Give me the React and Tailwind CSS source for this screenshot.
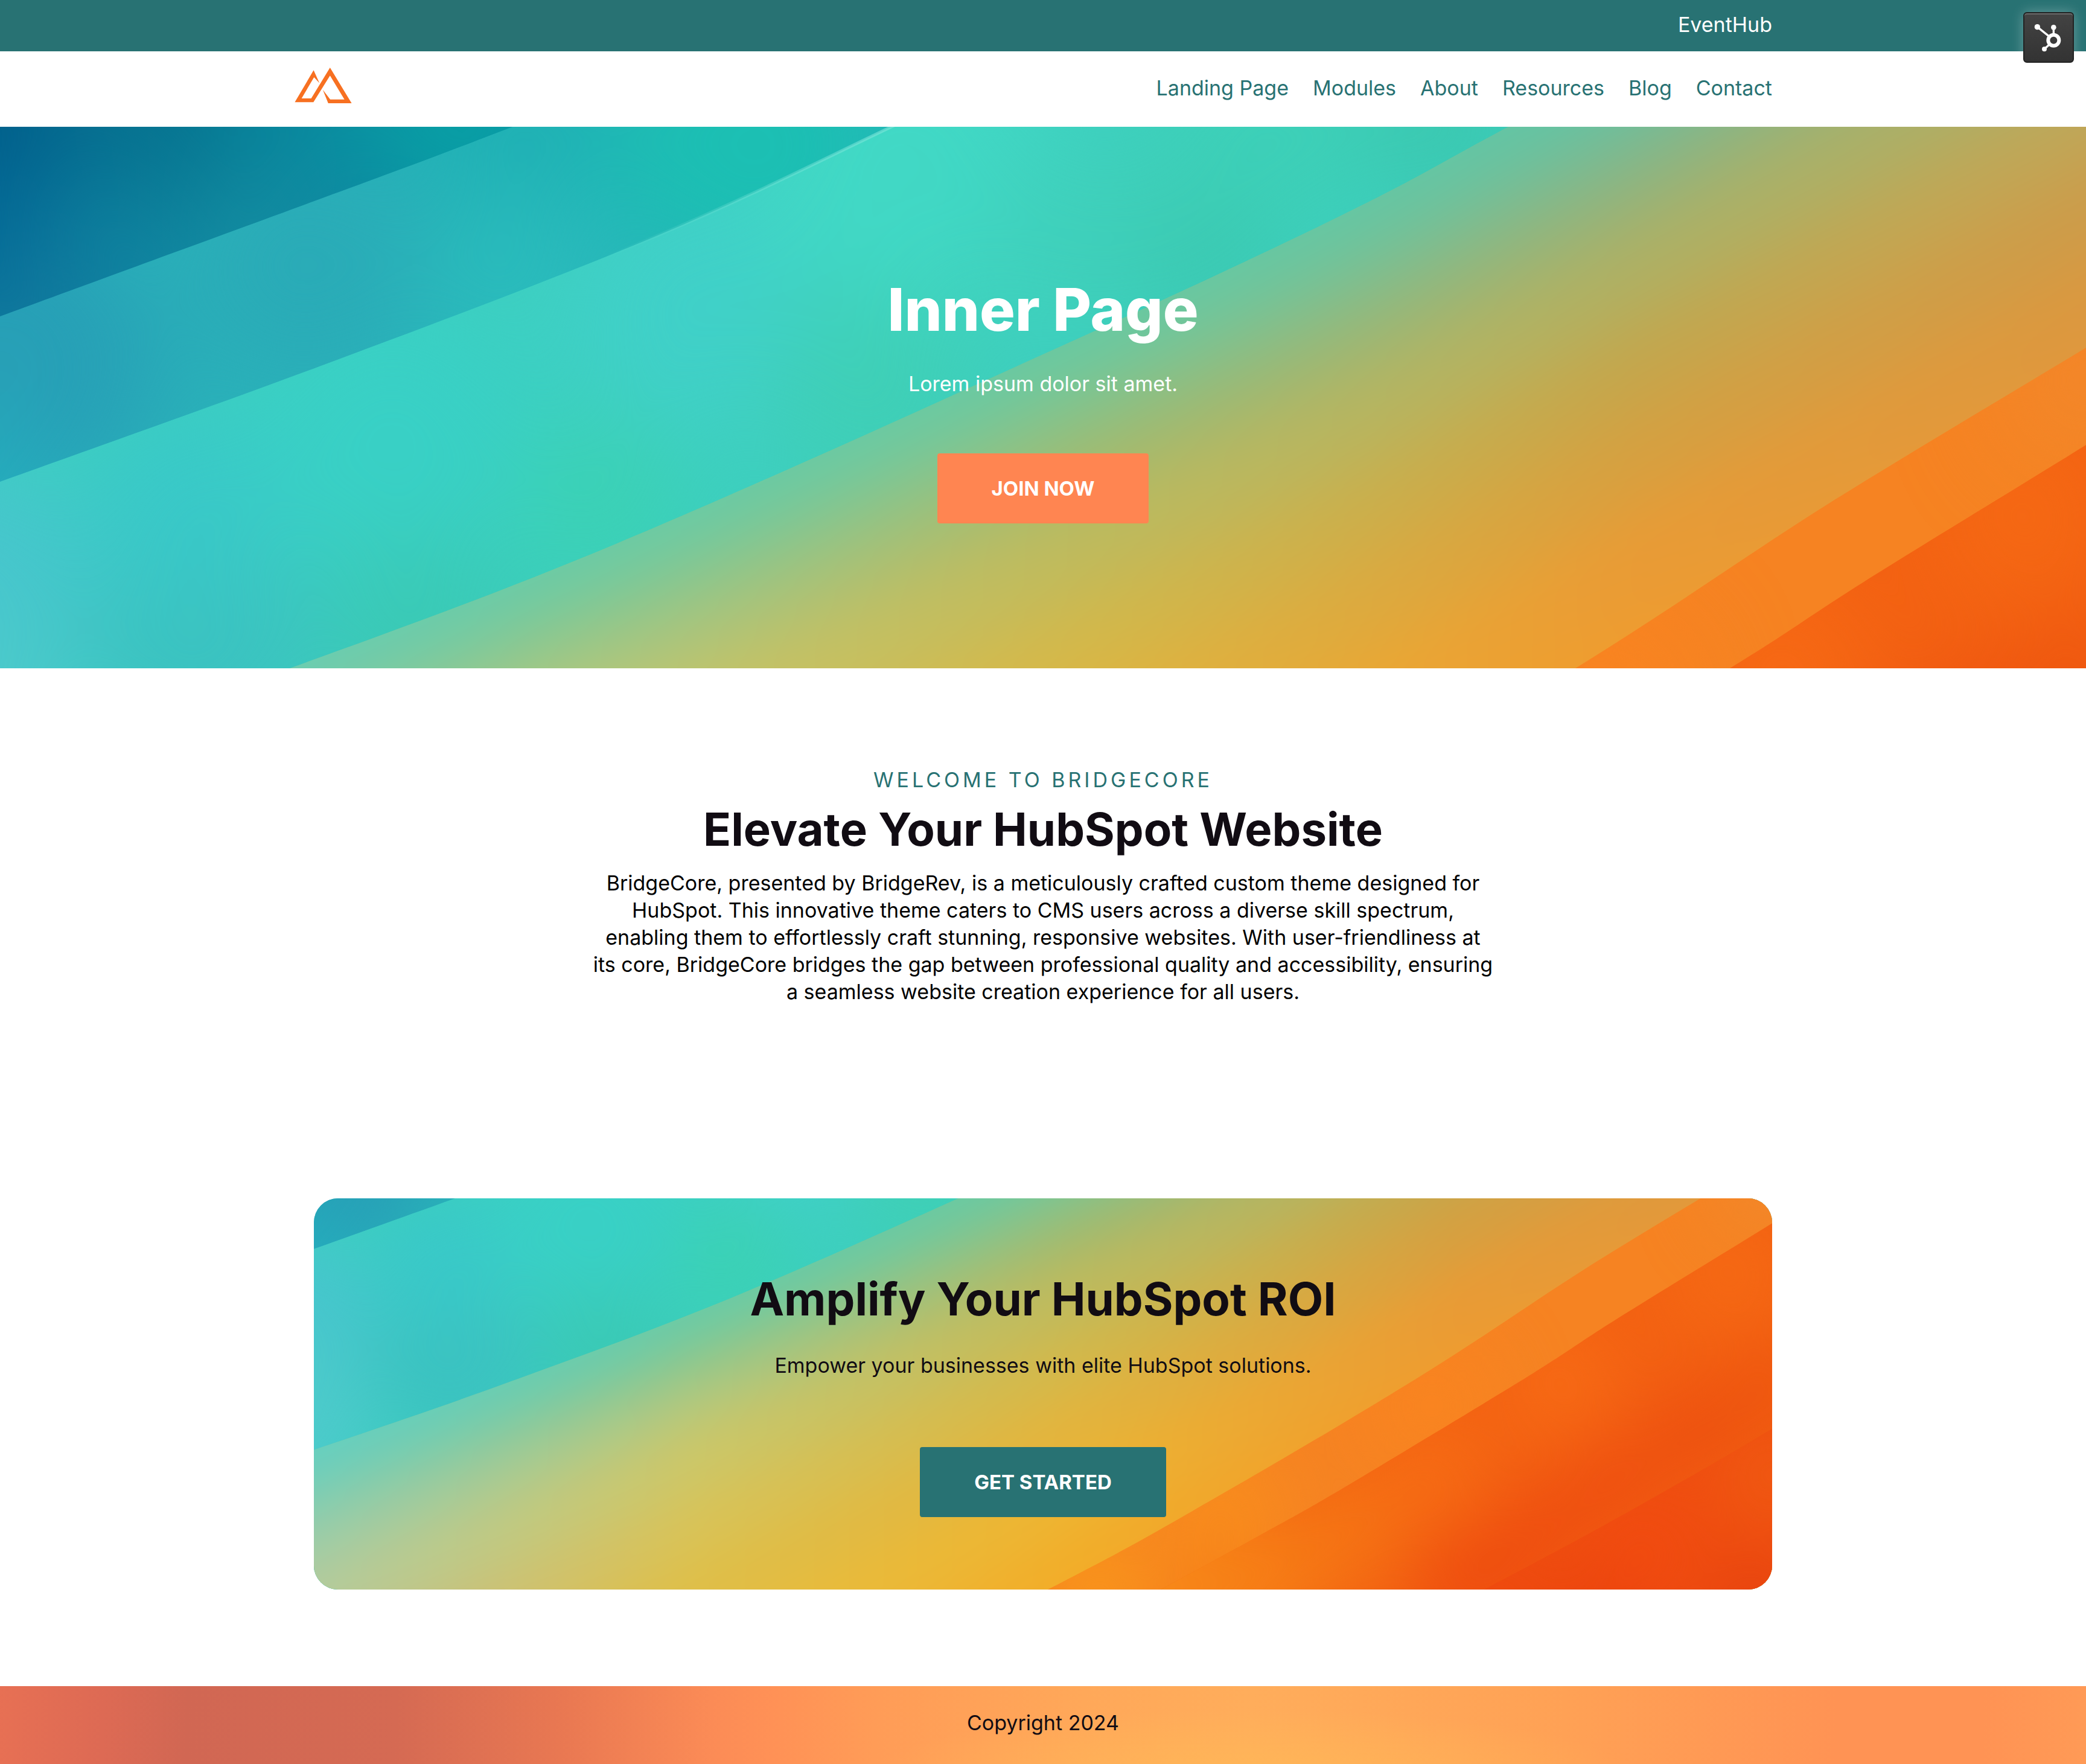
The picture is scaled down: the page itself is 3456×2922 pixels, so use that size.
import { useId } from "react";

function curve(points) {
  const at = (i) => points[Math.max(0, Math.min(points.length - 1, i))];
  let d = "";
  for (let i = 0; i < points.length - 1; i++) {
    const [p0, p1, p2, p3] = [at(i - 1), at(i), at(i + 1), at(i + 2)];
    const a = [Math.round(p1[0] + (p2[0] - p0[0]) / 6), Math.round(p1[1] + (p2[1] - p0[1]) / 6)];
    const b = [Math.round(p2[0] - (p3[0] - p1[0]) / 6), Math.round(p2[1] - (p3[1] - p1[1]) / 6)];
    d += ` C${a} ${b} ${p2}`;
  }
  return `M${points[0]}${d}`;
}

const EDGE_A = curve([[-300, 425], [0, 314], [518, 124], [849, 0], [1200, -140]]);
const EDGE_B = curve([[-300, 696], [0, 588], [529, 397], [1080, 184], [1477, 0], [1800, -160]]);
const EDGE_C = curve([[-300, 1160], [0, 1064], [480, 897], [1025, 689], [1728, 377], [2224, 146], [2499, 0], [2900, -215], [3456, -520], [3900, -770]]);
const EDGE_D = curve([[1350, 1590], [1739, 1395], [2056, 1224], [2610, 897], [3028, 625], [3456, 366], [3800, 160]]);
const EDGE_E = curve([[1850, 1480], [2226, 1275], [2452, 1147], [2874, 892], [3086, 755], [3456, 527], [3800, 310]]);
const EDGE_G = curve([[2500, 1540], [2849, 1355], [3131, 1202], [3457, 1013], [3800, 800]]);

const FRAME = "M-300 -300H4000V1700H-300Z";

const BANDS = [
  {
    id: "teal",
    path: FRAME,
    base: "#2ab3ba",
    blobs: [
      [0, 400, 260, "#279fb6"],
      [-50, 640, 160, "#25adbd"],
      [500, 230, 200, "#2aabb7"],
      [850, 0, 180, "#1fb0b4"],
      [850, 260, 160, "#2abcbc"],
      [1250, 30, 240, "#1cbfb3"],
    ],
  },
  {
    id: "deep",
    path: `${EDGE_A}V-400H-300Z`,
    base: "#0f84a0",
    blobs: [
      [-60, 0, 190, "#005c88"],
      [-60, 180, 150, "#046996"],
      [60, 330, 110, "#12799e"],
      [300, -40, 170, "#06728f"],
      [500, -20, 130, "#09899e"],
      [420, 200, 120, "#158fa2"],
      [780, 0, 180, "#099fa5"],
    ],
  },
  {
    id: "mint",
    path: `${EDGE_B}H4000V1700H-300Z`,
    base: "#3dcfc0",
    blobs: [
      [-80, 760, 220, "#47c5cd"],
      [-60, 1000, 200, "#4dcacb"],
      [330, 860, 200, "#3bc2c0"],
      [300, 620, 160, "#39c8c8"],
      [650, 520, 240, "#39d0c5"],
      [1000, 620, 150, "#3bd1b4"],
      [700, 840, 160, "#3ac9b4"],
      [1150, 300, 220, "#40d0c8"],
      [1500, 60, 260, "#41d8c5"],
      [1450, 450, 180, "#3fcfb6"],
      [1800, 200, 180, "#3fd0bb"],
      [2100, 20, 200, "#3dd0b8"],
      [2400, 0, 150, "#3bc8b0"],
      [2000, 230, 120, "#3bc8b0"],
    ],
  },
  { id: "olive", path: `${EDGE_C}V1700H-300Z`, base: "#80c594", layered: true, blobs: [] },
  {
    id: "orange",
    path: `${EDGE_D}V1700H1350Z`,
    base: "#f68322",
    blobs: [
      [3456, 420, 140, "#f2872a"],
      [2650, 960, 150, "#f98420"],
      [2150, 1220, 150, "#f88d1d"],
      [1850, 1400, 130, "#f9971a"],
      [2150, 1430, 130, "#f67f16"],
    ],
  },
  {
    id: "red",
    path: `${EDGE_E}V1700H1850Z`,
    base: "#f36112",
    blobs: [
      [2950, 900, 130, "#f76b15"],
      [3350, 640, 150, "#f56914"],
      [2000, 1400, 260, "#f88a19"],
      [2230, 1360, 170, "#f67f16"],
      [2440, 1260, 140, "#f57414"],
      [2650, 1120, 130, "#f66c14"],
      [3456, 920, 120, "#ee560f"],
      [3270, 1030, 120, "#ed5010"],
      [3080, 1150, 120, "#ee4f10"],
      [2900, 1270, 120, "#ee4d10"],
      [2740, 1390, 130, "#ee4c0f"],
    ],
  },
  {
    id: "ember",
    path: `${EDGE_G}V1700H2500Z`,
    base: "#ef4e10",
    blobs: [
      [2800, 1400, 140, "#ee4a0f"],
      [3456, 1120, 120, "#f05a12"],
      [3150, 1290, 130, "#f14b10"],
      [3050, 1480, 110, "#e9400d"],
      [3420, 1440, 130, "#e7430f"],
    ],
  },
];

// Each layer repeats the lower wave edge further down, coloured from left to right.
const OLIVE_LAYERS = [
  [-200, ["#66cfc0", "#6acba6", "#68c9a2", "#60c4a6", "#60c4a6"]],
  [65, ["#80cdb2", "#8ec78d", "#84c38c", "#74bb98", "#74bb98"]],
  [160, ["#9dcca8", "#b4c87d", "#a3ba6e", "#92b37d", "#92b37d"]],
  [270, ["#b4cb9c", "#cdc767", "#bfba5c", "#afb063", "#a9af6a"]],
  [430, ["#c0c090", "#d9c357", "#d3b84a", "#c4a64c", "#bfa759"]],
  [580, ["#ccbf70", "#dfbf48", "#e3b43d", "#d6a040", "#cc9c4a"]],
  [740, ["#d6c060", "#e6bf40", "#eeb431", "#e99b35", "#db983f"]],
  [920, ["#d6c060", "#ecbb38", "#f2ad29", "#f09c2e", "#e9993a"]],
];
const STOPS = [0, 900, 1800, 2700, 3456];

function Waves({ viewBox }) {
  const uid = useId();
  return (
    <svg
      aria-hidden="true"
      className="absolute inset-0 -z-10 h-full w-full"
      viewBox={viewBox}
      preserveAspectRatio="xMidYMid slice"
    >
      <defs>
        <filter id={`${uid}soft`} filterUnits="userSpaceOnUse" x="-400" y="-400" width="4400" height="2200" colorInterpolationFilters="sRGB">
          <feGaussianBlur stdDeviation="85" />
        </filter>
        <filter id={`${uid}blend`} filterUnits="userSpaceOnUse" x="-300" y="-400" width="4300" height="2200" colorInterpolationFilters="sRGB">
          <feGaussianBlur stdDeviation="50" />
        </filter>
        {OLIVE_LAYERS.map(([dy, colors]) => (
          <linearGradient key={dy} id={`${uid}layer${dy}`} gradientUnits="userSpaceOnUse" x1="0" y1="0" x2="3456" y2="0">
            {colors.map((color, i) => (
              <stop key={STOPS[i]} offset={STOPS[i] / 3456} stopColor={color} />
            ))}
          </linearGradient>
        ))}
        {BANDS.map((band) => (
          <clipPath key={band.id} id={`${uid}clip-${band.id}`}>
            <path d={band.path} />
          </clipPath>
        ))}
        <linearGradient id={`${uid}shine`} gradientUnits="userSpaceOnUse" x1="1000" y1="0" x2="1477" y2="0">
          <stop offset="0" stopColor="#7fe6da" stopOpacity="0" />
          <stop offset="1" stopColor="#7fe6da" stopOpacity="0.6" />
        </linearGradient>
      </defs>
      {BANDS.map((band) => (
        <g key={band.id} clipPath={`url(#${uid}clip-${band.id})`}>
          <path d={band.path} fill={band.base} />
          {band.layered && (
            <g filter={`url(#${uid}blend)`}>
              {OLIVE_LAYERS.map(([dy, colors]) => (
                <path
                  key={dy}
                  d={`${EDGE_C}V2400H-300Z`}
                  transform={`translate(0 ${dy})`}
                  fill={`url(#${uid}layer${dy})`}
                />
              ))}
            </g>
          )}
          {band.blobs.length > 0 && (
            <g filter={`url(#${uid}soft)`}>
              {band.blobs.map(([x, y, r, color]) => (
                <circle key={`${x}-${y}`} cx={x} cy={y} r={r} fill={color} />
              ))}
            </g>
          )}
        </g>
      ))}
      <path d={EDGE_B} fill="none" stroke={`url(#${uid}shine)`} strokeWidth="5" />
    </svg>
  );
}

const NAV = ["Landing Page", "Modules", "About", "Resources", "Blog", "Contact"];

export default function App() {
  return (
    <div className="relative bg-white font-['Inter',sans-serif] text-[34px] leading-[45px] text-black">
      <div className="bg-[#287273]">
        <div className="mx-auto flex max-w-[2416px] justify-end pt-[18px] pb-[22px]">
          <a href="#eventhub" className="text-white">EventHub</a>
        </div>
      </div>

      <button
        type="button"
        aria-label="HubSpot tools"
        className="absolute top-5 right-5 size-[84px] rounded-md border-2 border-[#222222] bg-linear-to-b from-[#434343] to-[#333333] shadow-[0_0_20px_rgba(255,255,255,0.3),inset_0_2px_0_#6b6b6b]"
      >
        <svg aria-hidden="true" viewBox="6 6 240 240" className="h-full w-full" fill="none" stroke="#ffffff">
          <circle cx="151" cy="140" r="27" strokeWidth="18" />
          <path d="M151 115V76M130 122L70 74M133 158L105 184" strokeWidth="10" />
          <g fill="#ffffff" stroke="none">
            <circle cx="70" cy="74" r="14" />
            <circle cx="151" cy="76" r="13" />
            <circle cx="105" cy="184" r="12" />
          </g>
        </svg>
      </button>

      <header className="mx-auto flex max-w-[2480px] items-center justify-between pt-[27px] pr-8 pb-[39px]">
        <a href="#home" aria-label="Home">
          <svg aria-hidden="true" viewBox="144 155 284 178" className="block h-[59px] w-[95px]">
            <path
              fill="#f77021"
              d="M144 328L238 168L267 232L240 203L178 309H226L320 155L428 333H311L284 266L321 314H392L320 195L237 328Z"
            />
          </svg>
        </a>
        <nav className="flex gap-10 pt-2">
          {NAV.map((item) => (
            <a key={item} href="#nav" className="text-[#287273]">{item}</a>
          ))}
        </nav>
      </header>

      <section className="relative isolate flex flex-col items-center overflow-hidden py-60 text-center text-white">
        <Waves viewBox="0 0 3456 897" />
        <h1 className="text-[98px] leading-[126px] font-extrabold">Inner Page</h1>
        <p className="mt-[37px]">Lorem ipsum dolor sit amet.</p>
        <a href="#join" className="mt-[93px] rounded bg-[#ff8551] px-[90px] py-[35px] text-[33px] leading-[46px] font-bold">
          JOIN NOW
        </a>
      </section>

      <section className="flex flex-col items-center py-40 text-center">
        <p className="leading-[50px] tracking-[5px] text-[#287273]">WELCOME TO BRIDGECORE</p>
        <h2 className="mt-2 text-[76px] leading-24 font-bold text-[#110c13]">Elevate Your HubSpot Website</h2>
        <p className="mt-[19px] max-w-[1500px]">
          BridgeCore, presented by BridgeRev, is a meticulously crafted custom theme designed for HubSpot. This
          innovative theme caters to CMS users across a diverse skill spectrum, enabling them to effortlessly craft
          stunning, responsive websites. With user-friendliness at <br />
          its core, BridgeCore bridges the gap between professional quality and accessibility, ensuring a seamless
          website creation experience for all users.
        </p>
      </section>

      <section className="py-40">
        <div className="relative isolate mx-auto flex max-w-[2416px] flex-col items-center overflow-hidden rounded-[40px] pt-[118px] pb-30 text-center text-[#110c13]">
          <Waves viewBox="0 468 3456 927" />
          <h2 className="text-[76px] leading-24 font-bold">Amplify Your HubSpot ROI</h2>
          <p className="mt-10">Empower your businesses with elite HubSpot solutions.</p>
          <a href="#start" className="mt-[113px] rounded bg-[#287273] px-[90px] py-[35px] text-[33px] leading-[46px] font-bold text-white">
            GET STARTED
          </a>
        </div>
      </section>

      <footer className="bg-[radial-gradient(ellipse_18%_80%_at_60%_110%,#ffb857cc,#ffb85700),linear-gradient(92deg,#e77054_0%,#dd6a54_5%,#d16753_9%,#d56a53_19%,#e97852_27%,#fb8b56_34%,#ff9156_37%,#ff9c57_42%,#ffa859_52%,#ffad5b_60%,#ffa155_75%,#ff9354_88%,#ff9354_95%,#ff9a56_100%)] pt-[38px] pb-[46px] text-center text-[#110c13]">
        Copyright 2024
      </footer>
    </div>
  );
}
